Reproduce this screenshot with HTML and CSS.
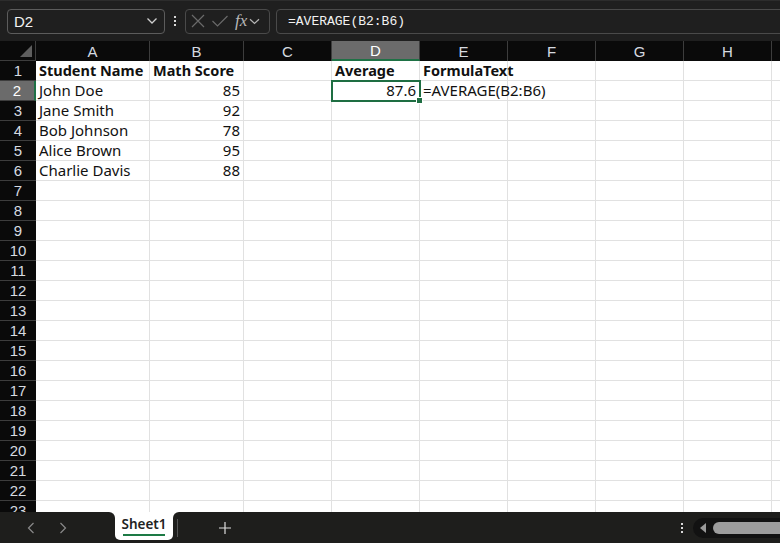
FILE: index.html
```html
<!DOCTYPE html>
<html lang="en">
<head>
    <meta charset="UTF-8">
    <meta name="viewport" content="width=device-width, initial-scale=1.0">
    <title>Book1 - Excel</title>
    <link rel="stylesheet" href="styles.css">
</head>
<body>

<div class="app">
    <div class="formula-bar">
        <div class="name-box">
            <span>D2</span>
            <svg class="chev" width="12" height="8" viewBox="0 0 12 8"><path d="M1.5 1.5 L6 6 L10.5 1.5" fill="none" stroke="#cfcfcf" stroke-width="1.3"/></svg>
        </div>
        <div class="vdots"><i></i><i></i><i></i></div>
        <div class="fx-box">
            <svg width="16" height="16" viewBox="0 0 16 16"><path d="M2 2 L14 14 M14 2 L2 14" stroke="#6a6a6a" stroke-width="1.2"/></svg>
            <svg width="18" height="16" viewBox="0 0 18 16"><path d="M1.5 8 L6.5 13 L16.5 3" fill="none" stroke="#6a6a6a" stroke-width="1.2"/></svg>
            <span class="fx">fx</span>
            <svg width="11" height="7" viewBox="0 0 11 7"><path d="M1 1.2 L5.5 5.5 L10 1.2" fill="none" stroke="#b5b5b5" stroke-width="1.2"/></svg>
        </div>
        <div class="formula-input">=AVERAGE(B2:B6)</div>
    </div>

    <div class="sheet-area">
        <div class="sheet">
            <div class="hd corner"><span class="tri"></span></div>
            <div class="hd col">A</div><div class="hd col">B</div><div class="hd col">C</div><div class="hd col sel">D</div><div class="hd col">E</div><div class="hd col">F</div><div class="hd col">G</div><div class="hd col">H</div><div class="hd col"></div>

            <div class="hd row">1</div><div class="c b">Student Name</div><div class="c b">Math Score</div><div class="c"></div><div class="c b">Average</div><div class="c b">FormulaText</div><div class="c"></div><div class="c"></div><div class="c"></div><div class="c"></div>
            <div class="hd row sel">2</div><div class="c">John Doe</div><div class="c n">85</div><div class="c"></div><div class="c n active">87.6<span class="handle"></span></div><div class="c over">=AVERAGE(B2:B6)</div><div class="c"></div><div class="c"></div><div class="c"></div><div class="c"></div>
            <div class="hd row">3</div><div class="c">Jane Smith</div><div class="c n">92</div><div class="c"></div><div class="c"></div><div class="c"></div><div class="c"></div><div class="c"></div><div class="c"></div><div class="c"></div>
            <div class="hd row">4</div><div class="c">Bob Johnson</div><div class="c n">78</div><div class="c"></div><div class="c"></div><div class="c"></div><div class="c"></div><div class="c"></div><div class="c"></div><div class="c"></div>
            <div class="hd row">5</div><div class="c">Alice Brown</div><div class="c n">95</div><div class="c"></div><div class="c"></div><div class="c"></div><div class="c"></div><div class="c"></div><div class="c"></div><div class="c"></div>
            <div class="hd row">6</div><div class="c">Charlie Davis</div><div class="c n">88</div><div class="c"></div><div class="c"></div><div class="c"></div><div class="c"></div><div class="c"></div><div class="c"></div><div class="c"></div>
            <div class="hd row">7</div><div class="c"></div><div class="c"></div><div class="c"></div><div class="c"></div><div class="c"></div><div class="c"></div><div class="c"></div><div class="c"></div><div class="c"></div>
            <div class="hd row">8</div><div class="c"></div><div class="c"></div><div class="c"></div><div class="c"></div><div class="c"></div><div class="c"></div><div class="c"></div><div class="c"></div><div class="c"></div>
            <div class="hd row">9</div><div class="c"></div><div class="c"></div><div class="c"></div><div class="c"></div><div class="c"></div><div class="c"></div><div class="c"></div><div class="c"></div><div class="c"></div>
            <div class="hd row">10</div><div class="c"></div><div class="c"></div><div class="c"></div><div class="c"></div><div class="c"></div><div class="c"></div><div class="c"></div><div class="c"></div><div class="c"></div>
            <div class="hd row">11</div><div class="c"></div><div class="c"></div><div class="c"></div><div class="c"></div><div class="c"></div><div class="c"></div><div class="c"></div><div class="c"></div><div class="c"></div>
            <div class="hd row">12</div><div class="c"></div><div class="c"></div><div class="c"></div><div class="c"></div><div class="c"></div><div class="c"></div><div class="c"></div><div class="c"></div><div class="c"></div>
            <div class="hd row">13</div><div class="c"></div><div class="c"></div><div class="c"></div><div class="c"></div><div class="c"></div><div class="c"></div><div class="c"></div><div class="c"></div><div class="c"></div>
            <div class="hd row">14</div><div class="c"></div><div class="c"></div><div class="c"></div><div class="c"></div><div class="c"></div><div class="c"></div><div class="c"></div><div class="c"></div><div class="c"></div>
            <div class="hd row">15</div><div class="c"></div><div class="c"></div><div class="c"></div><div class="c"></div><div class="c"></div><div class="c"></div><div class="c"></div><div class="c"></div><div class="c"></div>
            <div class="hd row">16</div><div class="c"></div><div class="c"></div><div class="c"></div><div class="c"></div><div class="c"></div><div class="c"></div><div class="c"></div><div class="c"></div><div class="c"></div>
            <div class="hd row">17</div><div class="c"></div><div class="c"></div><div class="c"></div><div class="c"></div><div class="c"></div><div class="c"></div><div class="c"></div><div class="c"></div><div class="c"></div>
            <div class="hd row">18</div><div class="c"></div><div class="c"></div><div class="c"></div><div class="c"></div><div class="c"></div><div class="c"></div><div class="c"></div><div class="c"></div><div class="c"></div>
            <div class="hd row">19</div><div class="c"></div><div class="c"></div><div class="c"></div><div class="c"></div><div class="c"></div><div class="c"></div><div class="c"></div><div class="c"></div><div class="c"></div>
            <div class="hd row">20</div><div class="c"></div><div class="c"></div><div class="c"></div><div class="c"></div><div class="c"></div><div class="c"></div><div class="c"></div><div class="c"></div><div class="c"></div>
            <div class="hd row">21</div><div class="c"></div><div class="c"></div><div class="c"></div><div class="c"></div><div class="c"></div><div class="c"></div><div class="c"></div><div class="c"></div><div class="c"></div>
            <div class="hd row">22</div><div class="c"></div><div class="c"></div><div class="c"></div><div class="c"></div><div class="c"></div><div class="c"></div><div class="c"></div><div class="c"></div><div class="c"></div>
            <div class="hd row">23</div><div class="c"></div><div class="c"></div><div class="c"></div><div class="c"></div><div class="c"></div><div class="c"></div><div class="c"></div><div class="c"></div><div class="c"></div>
        </div>
    </div>

    <div class="tab-bar">
        <div class="tab-left">
            <svg width="8" height="12" viewBox="0 0 8 12"><path d="M6.5 1 L1.5 6 L6.5 11" fill="none" stroke="#8a8a8a" stroke-width="1.2"/></svg>
            <svg width="8" height="12" viewBox="0 0 8 12"><path d="M1.5 1 L6.5 6 L1.5 11" fill="none" stroke="#8a8a8a" stroke-width="1.2"/></svg>
        </div>
        <div class="sheet-tab"><span>Sheet1</span></div>
        <div class="tab-right">
            <span class="sep"></span>
            <svg class="plus" width="12" height="12" viewBox="0 0 12 12"><path d="M6 0 V12 M0 6 H12" stroke="#dcdcdc" stroke-width="1.2"/></svg>
            <div class="vdots small"><i></i><i></i><i></i></div>
            <div class="hscroll">
                <span class="larrow"></span>
                <span class="thumb"></span>
            </div>
        </div>
    </div>
</div>

</body>
</html>
```

FILE: styles.css
```css
body {
    margin: 0;
    background-color: #1f1f1f;
    font-family: "Liberation Sans", Arial, sans-serif;
    overflow: hidden;
}
.app {
    width: 780px;
    height: 543px;
    display: flex;
    flex-direction: column;
    overflow: hidden;
}

/* formula bar */
.formula-bar {
    height: 41px;
    box-sizing: border-box;
    display: flex;
    align-items: center;
    padding-left: 7px;
    background-color: #1f1f1f;
    border-top: 1px solid #2c2c2c;
    flex-shrink: 0;
}
.name-box {
    width: 158px;
    height: 25px;
    box-sizing: border-box;
    border: 1px solid #5c5c5c;
    border-radius: 4px;
    display: flex;
    align-items: center;
    justify-content: space-between;
    padding: 0 6px 0 6px;
    color: #f2f2f2;
    font-size: 15px;
}
.vdots {
    width: 20px;
    display: flex;
    flex-direction: column;
    align-items: center;
    gap: 2px;
}
.vdots i {
    width: 2px;
    height: 2px;
    background: #d8d8d8;
}
.fx-box {
    width: 85px;
    height: 25px;
    box-sizing: border-box;
    border: 1px solid #4a4a4a;
    border-radius: 4px;
    display: flex;
    align-items: center;
    gap: 5px;
    padding-left: 4px;
}
.fx {
    font-family: "Liberation Serif", "Times New Roman", serif;
    font-style: italic;
    font-size: 17px;
    color: #b8b8b8;
    margin-left: 1px;
    margin-right: -3px;
}
.formula-input {
    flex: 1;
    height: 25px;
    box-sizing: border-box;
    margin-left: 6px;
    margin-right: -10px;
    border: 1px solid #4a4a4a;
    border-radius: 4px;
    color: #f2f2f2;
    font-family: "Liberation Mono", "Courier New", monospace;
    font-size: 13px;
    line-height: 23px;
    padding-left: 11px;
}

/* grid */
.sheet-area {
    flex: 1;
    overflow: hidden;
    background: #fff;
}
.sheet {
    display: grid;
    grid-template-columns: 36px 114px 94px repeat(7, 88px);
    grid-auto-rows: 20px;
}
.hd {
    background-color: #0a0a0a;
    color: #d6dbe0;
    font-size: 15px;
    display: flex;
    align-items: center;
    justify-content: center;
    box-sizing: border-box;
}
.hd.col {
    border-right: 1px solid #3d3d3d;
}
.hd.row {
    border-bottom: 1px solid #3d3d3d;
}
.hd.sel {
    background-color: #6b6b6b;
    color: #fff;
}
.hd.col.sel {
    border-bottom: 2px solid #1e7145;
}
.hd.row.sel {
    border-right: 2px solid #1e7145;
}
.corner {
    border-right: 1px solid #3d3d3d;
    border-bottom: 1px solid #3d3d3d;
    justify-content: flex-end;
    align-items: flex-end;
    padding: 0 3px 3px 0;
}
.tri {
    width: 0;
    height: 0;
    border-left: 12px solid transparent;
    border-bottom: 12px solid #5e5e5e;
}
.c {
    box-sizing: border-box;
    border-right: 1px solid #e1e1e1;
    border-bottom: 1px solid #e1e1e1;
    font-family: "Noto Sans", Arial, sans-serif;
    font-size: 15px;
    color: #111;
    line-height: 19px;
    padding: 0 3px;
    white-space: nowrap;
    position: relative;
}
.c.b {
    font-weight: bold;
    font-size: 14.5px;
}
.c.n {
    text-align: right;
}
.c.over {
    overflow: visible;
    padding-left: 3px;
}
.c.active {
    outline: 2px solid #1e6e42;
    outline-offset: -1px;
    z-index: 1;
}
.handle {
    position: absolute;
    right: -4px;
    bottom: -4px;
    width: 5px;
    height: 5px;
    background: #1e6e42;
    border: 1px solid #fff;
}

/* sheet tabs */
.tab-bar {
    height: 31px;
    flex-shrink: 0;
    display: flex;
    background: #fff;
}
.tab-left {
    width: 115px;
    background-color: #1e1e1c;
    border-top-right-radius: 6px;
    display: flex;
    align-items: center;
    gap: 24px;
    padding-left: 27px;
    box-sizing: border-box;
}
.sheet-tab {
    width: 58px;
    background: #1e1e1c;
}
.sheet-tab span {
    display: block;
    height: 28px;
    background: #fff;
    border-radius: 0 0 5px 5px;
    font-family: "Noto Sans", Arial, sans-serif;
    font-weight: 600;
    font-size: 13.5px;
    color: #222;
    text-align: center;
    line-height: 25px;
    position: relative;
}
.sheet-tab span::after {
    content: "";
    position: absolute;
    left: 8px;
    right: 8px;
    bottom: 4px;
    height: 2px;
    background: #1d7a45;
}
.tab-right {
    flex: 1;
    background-color: #1e1e1c;
    border-top-left-radius: 6px;
    display: flex;
    align-items: center;
}
.sep {
    width: 1px;
    height: 18px;
    background: #555;
    margin-left: 4px;
}
.plus {
    margin-left: 41px;
}
.vdots.small {
    margin-left: 446px;
    width: 10px;
}
.hscroll {
    margin-left: 6px;
    flex: 1;
    height: 20px;
    background: #121212;
    border-radius: 10px 0 0 10px;
    display: flex;
    align-items: center;
    padding-left: 7px;
}
.larrow {
    width: 0;
    height: 0;
    border-top: 5px solid transparent;
    border-bottom: 5px solid transparent;
    border-right: 6px solid #9a9a9a;
}
.thumb {
    flex: 1;
    height: 12px;
    margin-left: 7px;
    background: #9d9d9d;
    border-radius: 6px 0 0 6px;
}
```
